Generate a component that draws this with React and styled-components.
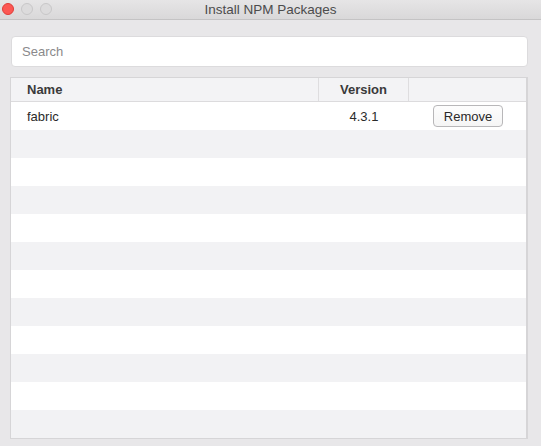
import React from "react";
import styled, { createGlobalStyle } from "styled-components";

const Global = createGlobalStyle`
  html, body { margin: 0; padding: 0; }
  body { background: #e8e7e9; font-family: "Helvetica Neue", "Liberation Sans", Arial, sans-serif; }
  #root { width: 541px; height: 446px; }
`;

const Window = styled.div`
  width: 541px;
  height: 446px;
  display: flex;
  flex-direction: column;
  background: #e8e7e9;
  overflow: hidden;
`;

const TitleBar = styled.div`
  position: relative;
  flex-shrink: 0;
  height: 19px;
  display: flex;
  align-items: center;
  justify-content: center;
  background: linear-gradient(#e6e5e6, #d9d8d9);
  border-bottom: 1px solid #c4c3c4;
  font-size: 13.5px;
  color: #4c4c4c;
`;

const Lights = styled.div`
  position: absolute;
  left: 2px;
  top: 3px;
  display: flex;
  gap: 7px;
`;

const Light = styled.span`
  width: 12px;
  height: 12px;
  border-radius: 50%;
  box-sizing: border-box;
  background: ${(p) => (p.red ? "#fc5753" : "#dcdbdc")};
  border: 1px solid ${(p) => (p.red ? "#df3d38" : "#c8c7c8")};
`;

const Body = styled.div`
  flex: 1;
  display: flex;
  flex-direction: column;
  padding: 16px 13px 0 10px;
  gap: 10px;
  & > * { flex-shrink: 0; }
`;

const Search = styled.div`
  margin-left: 1px;
  height: 31px;
  box-sizing: border-box;
  background: #fff;
  border: 1px solid #dcdbdd;
  border-radius: 4px;
  display: flex;
  align-items: center;
  padding-left: 10px;
  font-size: 13px;
  color: #8a898b;
`;

const Table = styled.div`
  display: flex;
  flex-direction: column;
  border: 1px solid #d6d5d7;
  border-right-width: 2px;
  background: #fff;
  & > * { flex-shrink: 0; }
`;

const Row = styled.div`
  display: grid;
  grid-template-columns: 308px 90px 1fr;
  height: ${(p) => (p.head ? "23px" : "28px")};
  background: ${(p) => (p.head ? "#f3f3f5" : p.alt ? "#f2f2f4" : "#ffffff")};
  border-bottom: ${(p) => (p.head ? "1px solid #dcdbdd" : "none")};
  font-size: 13px;
  color: #2a2a2a;
`;

const Cell = styled.div`
  display: flex;
  align-items: center;
  justify-content: ${(p) => p.align || "flex-start"};
  padding-left: ${(p) => (p.pl != null ? p.pl : 0)}px;
  border-right: ${(p) => (p.sep ? "1px solid #dedddf" : "none")};
  font-weight: ${(p) => (p.bold ? 700 : 400)};
  color: ${(p) => (p.bold ? "#3a3a3a" : "#2a2a2a")};
`;

const Button = styled.button`
  margin-left: 24px;
  width: 70px;
  height: 22px;
  box-sizing: border-box;
  background: linear-gradient(#fdfdfd, #f5f5f5);
  border: 1px solid #b8b7b9;
  border-radius: 4px;
  font-family: inherit;
  font-size: 13px;
  color: #2a2a2a;
  padding: 0;
`;

export default function App() {
  const rows = Array.from({ length: 11 }, (_, i) => i);
  return (
    <Window>
      <Global />
      <TitleBar>
        <Lights>
          <Light red />
          <Light />
          <Light />
        </Lights>
        Install NPM Packages
      </TitleBar>
      <Body>
        <Search>Search</Search>
        <Table>
          <Row head>
            <Cell bold pl={16} sep>Name</Cell>
            <Cell bold align="center" sep>Version</Cell>
            <Cell />
          </Row>
          <Row>
            <Cell pl={16}>fabric</Cell>
            <Cell align="center">4.3.1</Cell>
            <Cell><Button>Remove</Button></Cell>
          </Row>
          {rows.map((i) => (
            <Row key={i} alt={i % 2 === 0}>
              <Cell />
              <Cell />
              <Cell />
            </Row>
          ))}
        </Table>
      </Body>
    </Window>
  );
}
